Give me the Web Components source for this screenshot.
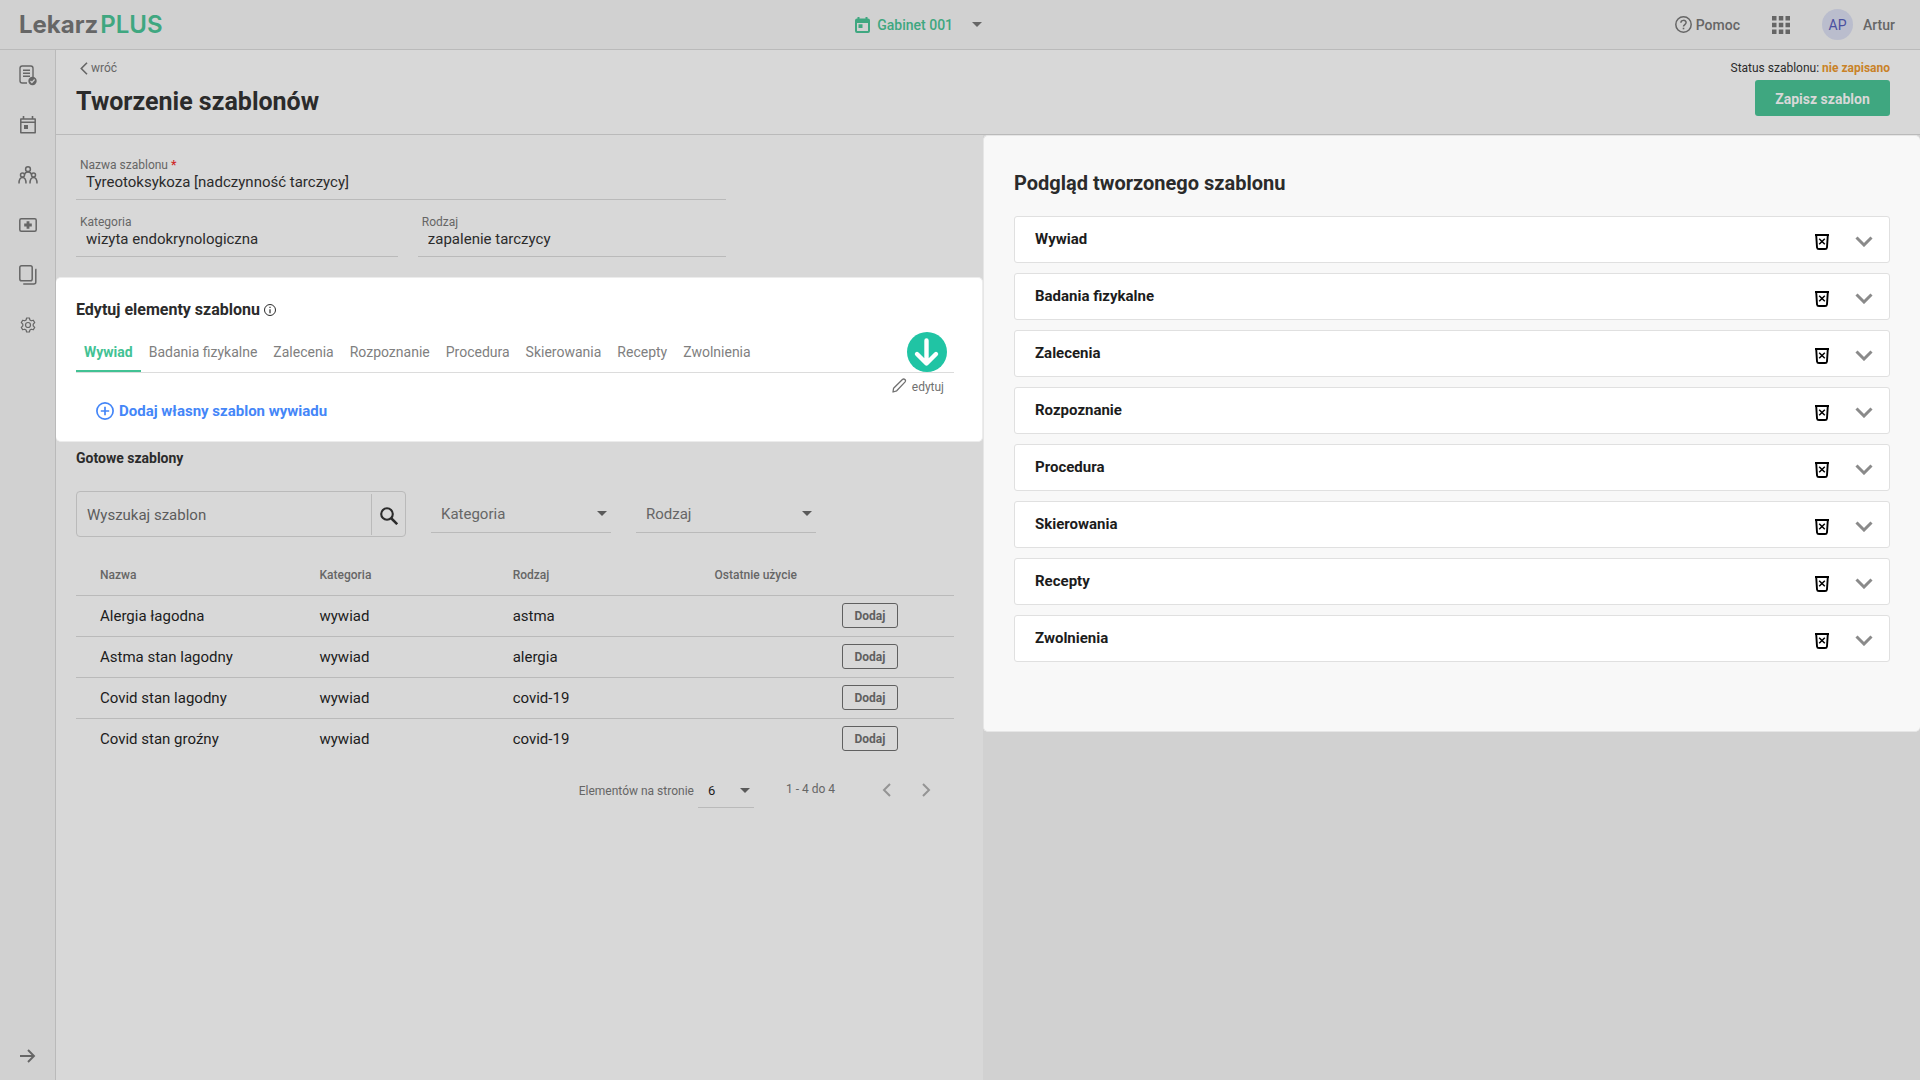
<!DOCTYPE html>
<html lang="pl">
<head>
<meta charset="utf-8">
<title>LekarzPLUS – Tworzenie szablonów</title>
<style>
  :root {
    --bar: #d1d1d1;
    --page: #d8d8d8;
    --line: #bababa;
    --ink: #2b2b2b;
    --muted: #666;
    --green: #3fa780;
  }
  * { box-sizing: border-box; }
  body {
    margin: 0;
    font: 14px/20px Roboto, "Liberation Sans", sans-serif;
    color: var(--ink);
    background: var(--page);
  }
</style>
</head>
<body>
<template-app></template-app>

<script>
const base = `
  *, *::before, *::after { box-sizing: border-box; }
  button, input, select { font: inherit; color: inherit; margin: 0; border: 0; padding: 0; background: none; border-radius: 0; outline: 0; }
  button, select { cursor: pointer; }
  a { color: inherit; text-decoration: none; }
  h1, h2, h3, p { margin: 0; }
`;

class BaseElement extends HTMLElement {
  connectedCallback() {
    if (this.shadowRoot) return;
    const root = this.attachShadow({ mode: 'open' });
    const template = document.createElement('template');
    template.innerHTML = `<style>${base}${this.styles()}</style>${this.markup()}`;
    root.append(template.content.cloneNode(true));
  }
  attr(name, fallback = '') { return this.getAttribute(name) ?? fallback; }
  styles() { return ':host { display: block; }'; }
  markup() { return '<slot></slot>'; }
}

/* name: [width, height, drawing] */
const icons = {
  record: [18, 21, '<path d="M14 12V3.2Q14 1 11.8 1H3.2Q1 1 1 3.2v12.6Q1 18 3.200 18H8" fill="none" stroke="currentColor" stroke-width="1.4"/><path d="M4 5.200h7M4 8.200h7M4 11.200h7" stroke="currentColor" stroke-width="1.400"/><circle cx="13.500" cy="16" r="4.200" fill="currentColor"/><path d="M11.500 16l1.400 1.500 2.700-3" fill="none" stroke="#d1d1d1" stroke-width="1.200"/>'],
  calendar: [16, 18, '<path d="M.8 3h14.400v13.700H.8zM.8 6.200h14.400" fill="none" stroke="currentColor" stroke-width="1.500" stroke-linejoin="round"/><path d="M3.500 0v3M12.500 0v3" stroke="currentColor" stroke-width="1.600"/><path d="M4 9h4v4H4z" fill="currentColor"/>'],
  calendarBold: [15, 16, '<path fill="currentColor" fill-rule="evenodd" d="M2 1.500h.5V0h2v1.500h6V0h2v1.500h.5q2 0 2 2V14q0 2-2 2H2q-2 0-2-2V3.500q0-2 2-2zM2 6v8h11V6zM3.500 7.200h4v3.800h-4z"/>'],
  people: [20, 18, '<g fill="none" stroke="currentColor" stroke-width="1.500"><circle cx="10" cy="3.200" r="2.400"/><circle cx="4.500" cy="9" r="2"/><circle cx="15.500" cy="9" r="2"/><path d="M6.500 8.500C7 6.500 8.500 6 10 6s3 .5 3.500 2.500M1 17.500c0-4 1-6 3.500-6S8 13.500 8 17.500M12 17.500c0-4 1-6 3.500-6s3.500 2 3.500 6"/></g>'],
  medical: [18, 14, '<rect x=".8" y=".8" width="16.400" height="12.400" rx="1.500" fill="none" stroke="currentColor" stroke-width="1.500"/><path d="M9 3.200v7.600M5.200 7h7.600" stroke="currentColor" stroke-width="2.800"/>'],
  copy: [18, 20, '<rect x=".8" y=".8" width="12.400" height="14.900" rx="1.800" fill="none" stroke="currentColor" stroke-width="1.500"/><path d="M16.300 4.500h.5V17q0 2-2 2H5v-.8" fill="none" stroke="currentColor" stroke-width="1.500"/>'],
  gear: [16, 16, '<path d="M6.600 1h2.800l.5 2 1.400.8 2-.6 1.400 2.400-1.500 1.500v1.800l1.500 1.500-1.400 2.400-2-.6-1.400.8-.5 2H6.600l-.5-2-1.400-.8-2 .6-1.400-2.400 1.500-1.500V7.100L1.300 5.600l1.400-2.400 2 .6L6.100 3z" fill="none" stroke="currentColor" stroke-width="1.200" stroke-linejoin="round"/><circle cx="8" cy="8" r="2.500" fill="none" stroke="currentColor" stroke-width="1.200"/>'],
  right: [16, 14, '<path d="M0 7h14M8 1l6 6-6 6" fill="none" stroke="currentColor" stroke-width="1.900"/>'],
  back: [8, 13, '<path d="M7 .8L1.300 6.500 7 12.200" fill="none" stroke="currentColor" stroke-width="1.600"/>'],
  prev: [9, 14, '<path d="M8 1L2 7l6 6" fill="none" stroke="currentColor" stroke-width="2"/>'],
  next: [9, 14, '<path d="M1 1l6 6-6 6" fill="none" stroke="currentColor" stroke-width="2"/>'],
  caret: [10, 5, '<path d="M0 0h10L5 5z" fill="currentColor"/>'],
  help: [17, 17, '<circle cx="8.500" cy="8.500" r="7.700" fill="none" stroke="currentColor" stroke-width="1.500"/><path d="M5.900 6.800c0-3.200 5.200-3.200 5.200-.2 0 1.900-2.600 2-2.600 4" fill="none" stroke="currentColor" stroke-width="1.500"/><path d="M7.700 11.700h1.600v1.600H7.700z" fill="currentColor"/>'],
  apps: [18, 18, '<path d="M0 0h4.500v4.500H0zM6.800 0h4.500v4.500H6.800zM13.500 0H18v4.500h-4.500zM0 6.800h4.500v4.500H0zM6.800 6.800h4.500v4.500H6.800zM13.500 6.800H18v4.500h-4.500zM0 13.500h4.500V18H0zM6.800 13.500h4.500V18H6.800zM13.500 13.500H18V18h-4.500z" fill="currentColor"/>'],
  info: [12, 12, '<circle cx="6" cy="6" r="5.500" fill="none" stroke="currentColor"/><path d="M5.400 2.700h1.200v1.200H5.400zM5.400 5.200h1.200v4H5.400z" fill="currentColor"/>'],
  plus: [18, 18, '<circle cx="9" cy="9" r="8.100" fill="none" stroke="currentColor" stroke-width="1.700"/><path d="M9 4.800v8.400M4.800 9h8.400" stroke="currentColor" stroke-width="1.700"/>'],
  pencil: [15, 15, '<path d="M1 14l.6-3.800L10.400 1.500q1.300-1.100 2.500 0 1.200 1.200 0 2.600L4.700 12.800z" fill="none" stroke="currentColor" stroke-width="1.300" stroke-linejoin="round"/>'],
  search: [18, 18, '<circle cx="7" cy="7" r="5.800" fill="none" stroke="currentColor" stroke-width="2.100"/><path d="M11 11l6.200 6.200" stroke="currentColor" stroke-width="2.500"/>'],
  trash: [14, 16, '<path d="M0 1h14M1.200 1l.8 12.300Q2.200 15 4 15h6q1.800 0 2-1.700L12.800 1" fill="none" stroke="currentColor" stroke-width="1.900"/><path d="M4.200 4.700l5.600 5.600M9.800 4.700l-5.600 5.600" stroke="currentColor" stroke-width="1.500"/>'],
  down: [18, 11, '<path d="M1.500 1.500L9 9l7.500-7.500" fill="none" stroke="currentColor" stroke-width="3"/>'],
  pointer: [40, 40, '<circle cx="20" cy="20" r="20" fill="#20c4a4"/><path d="M19.500 8.500V31M10 22l9.500 9.500L29 22" fill="none" stroke="#fff" stroke-width="4.400" stroke-linecap="round" stroke-linejoin="round"/>'],
};

customElements.define('app-icon', class extends BaseElement {
  styles() { return ':host { display: inline-flex; flex: none; } svg { display: block; }'; }
  markup() {
    const [w, h, art] = icons[this.attr('name')];
    return `<svg width="${w}" height="${h}" viewBox="0 0 ${w} ${h}" aria-hidden="true">${art}</svg>`;
  }
});

customElements.define('app-header', class extends BaseElement {
  styles() { return `
    :host { display: flex; justify-content: space-between; align-items: center; height: 50px; padding: 0 25px 0 19px;
      background: var(--bar); border-bottom: 1px solid var(--line); color: var(--muted); font-weight: 500; }
    .logo { font: 700 24px/30px Inter, sans-serif; }
    .logo span { color: var(--green); font-weight: 600; margin-left: 2px; }
    button, a { display: flex; align-items: center; }
    .office { color: var(--green); gap: 7px; }
    .office app-icon:last-child { color: var(--muted); margin-left: 12px; }
    .tools { display: flex; align-items: center; }
    .help { gap: 4px; margin-right: 32px; }
    .user { gap: 10px; margin-left: 32px; }
    .avatar { display: grid; place-items: center; width: 31px; height: 31px; border-radius: 50%;
      background: #babdcd; color: #4a50a0; font-weight: 400; }
  `; }
  markup() { return `
    <a class="logo" href="#start">Lekarz<span>PLUS</span></a>
    <button class="office" type="button"><app-icon name="calendarBold"></app-icon>Gabinet 001<app-icon name="caret"></app-icon></button>
    <div class="tools">
      <a class="help" href="#pomoc"><app-icon name="help"></app-icon>Pomoc</a>
      <button type="button" aria-label="Aplikacje"><app-icon name="apps"></app-icon></button>
      <button class="user" type="button"><span class="avatar">AP</span>Artur</button>
    </div>`; }
});

customElements.define('side-nav', class extends BaseElement {
  styles() { return `
    :host { display: flex; flex-direction: column; justify-content: space-between; width: 56px; flex: none;
      background: var(--bar); border-right: 1px solid var(--line); color: var(--muted); }
    nav { display: flex; flex-direction: column; }
    a, button { display: grid; place-items: center; width: 55px; height: 50px; }
    button { height: 48px; }
  `; }
  markup() {
    const items = [['record', 'Wizyty'], ['calendar', 'Kalendarz'], ['people', 'Pacjenci'], ['medical', 'Leki'], ['copy', 'Szablony'], ['gear', 'Ustawienia']];
    return `<nav>${items.map(([i, l]) => `<a href="#${i}" aria-label="${l}"><app-icon name="${i}"></app-icon></a>`).join('')}</nav>
      <button type="button" aria-label="Rozwiń menu"><app-icon name="right"></app-icon></button>`;
  }
});

customElements.define('page-head', class extends BaseElement {
  styles() { return `
    :host { display: flex; justify-content: space-between; height: 85px; padding: 10px 30px 0 20px; border-bottom: 1px solid var(--line); }
    .back { display: flex; align-items: center; gap: 3px; margin-left: 4px; font-size: 12px; line-height: 16px; color: var(--muted); }
    h1 { font: 700 25px/32px Roboto, sans-serif; margin-top: 10px; }
    .status { display: flex; flex-direction: column; align-items: flex-end; gap: 4px; font-size: 12px; line-height: 16px; }
    b { color: #c98228; font-weight: 700; }
    button { min-width: 135px; height: 36px; padding: 1px 20px 0; border-radius: 3px; background: var(--green); color: #d8d8d8; font-weight: 700; font-size: 14px; }
  `; }
  markup() { return `
    <div><a class="back" href="#wroc"><app-icon name="back"></app-icon>wróć</a><h1><slot></slot></h1></div>
    <div class="status"><p>Status szablonu: <b>nie zapisano</b></p><button type="button">Zapisz szablon</button></div>`; }
});

customElements.define('text-field', class extends BaseElement {
  styles() { return `
    :host { display: block; }
    label { display: block; padding-left: 4px; font-size: 12px; line-height: 16px; color: var(--muted); }
    i { color: #cf2a2a; font-style: normal; font-weight: 700; }
    input { display: block; width: 100%; height: 27px; padding: 0 10px 8px; border-bottom: 1px solid var(--line); font-size: 15px; }
  `; }
  markup() { return `
    <label for="f">${this.attr('label')}${this.hasAttribute('required') ? ' <i>*</i>' : ''}</label>
    <input id="f" type="text" value="${this.attr('value')}">`; }
});

customElements.define('select-field', class extends BaseElement {
  styles() { return `
    :host { display: grid; align-items: center; width: 180px; height: 42px; border-bottom: 1px solid var(--line); color: var(--muted); font-size: 15px; }
    select { grid-area: 1 / 1; appearance: none; width: 100%; height: 100%; padding: 4px 28px 0 10px; }
    app-icon { grid-area: 1 / 1; justify-self: end; margin: 4px 4px 0 0; pointer-events: none; color: #5a5a5a; }
    :host([compact]) { width: 56px; height: 35px; font-size: 13px; color: #1c1c1c; }
    :host([compact]) select { padding-top: 1px; }
    :host([compact]) app-icon { margin-top: 0; }
  `; }
  markup() { return `<select aria-label="${this.attr('label')}"><option>${this.attr('value', this.attr('label'))}</option></select><app-icon name="caret"></app-icon>`; }
});

customElements.define('template-form', class extends BaseElement {
  styles() { return `
    :host { display: block; padding: 22px 29px 20px 20px; }
    form { display: grid; grid-template-columns: 322fr 308fr; gap: 14px 20px; width: 74%; }
    .wide { grid-column: 1 / -1; }
  `; }
  markup() { return `<form>
    <text-field class="wide" label="Nazwa szablonu" required value="Tyreotoksykoza [nadczynność tarczycy]"></text-field>
    <text-field label="Kategoria" value="wizyta endokrynologiczna"></text-field>
    <text-field label="Rodzaj" value="zapalenie tarczycy"></text-field>
  </form>`; }
});

customElements.define('element-editor', class extends BaseElement {
  styles() { return `
    :host { display: block; padding: 22px 28px 20px 20px; background: #fff; border: 1px solid #ececec; border-width: 1px 1px 1px 0; border-radius: 5px; }
    h2 { display: flex; align-items: center; gap: 4px; font: 700 16px/20px Roboto, sans-serif; }
    .bar { position: relative; margin-top: 13px; }
    .tabs { display: flex; height: 40px; border-bottom: 1px solid #dcdcdc; color: #808080; }
    .tabs button { padding: 0 8px 2px; }
    .tabs [aria-selected=true] { color: #42c294; font-weight: 700; box-shadow: inset 0 -2px #42c294; }
    .pointer { position: absolute; right: 7px; bottom: 1px; }
    .edit { display: flex; align-items: flex-start; gap: 5px; margin: 5px 10px 0 auto; font-size: 12px; line-height: 18px; color: #707070; }
    .add { display: flex; align-items: center; gap: 5px; margin: 5px 0 0 20px; font-size: 15px; line-height: 20px; font-weight: 700; color: #4486f8; }
  `; }
  markup() {
    const tabs = ['Wywiad', 'Badania fizykalne', 'Zalecenia', 'Rozpoznanie', 'Procedura', 'Skierowania', 'Recepty', 'Zwolnienia'];
    return `<h2>Edytuj elementy szablonu<app-icon name="info"></app-icon></h2>
      <div class="bar">
        <div class="tabs" role="tablist">${tabs.map((t, i) => `<button type="button" role="tab" aria-selected="${i === 0}">${t}</button>`).join('')}</div>
        <app-icon class="pointer" name="pointer"></app-icon>
      </div>
      <button class="edit" type="button"><app-icon name="pencil"></app-icon>edytuj</button>
      <button class="add" type="button"><app-icon name="plus"></app-icon>Dodaj własny szablon wywiadu</button>`;
  }
});

customElements.define('template-filters', class extends BaseElement {
  styles() { return `
    :host { display: flex; align-items: flex-start; gap: 25px; }
    form { display: flex; align-items: center; width: 330px; height: 46px; border: 1px solid var(--line); border-radius: 4px; }
    input { flex: 1; min-width: 0; height: 100%; padding: 2px 10px 0; font-size: 15px; }
    input::placeholder { color: #5c5c5c; opacity: 1; }
    button { display: grid; place-items: center; width: 34px; height: 41px; padding-top: 3px; border-left: 1px solid var(--line); }
  `; }
  markup() { return `
    <form role="search"><input type="text" aria-label="Wyszukaj szablon" placeholder="Wyszukaj szablon"><button type="button" aria-label="Szukaj"><app-icon name="search"></app-icon></button></form>
    <select-field label="Kategoria"></select-field><select-field label="Rodzaj"></select-field>`; }
});

customElements.define('template-table', class extends BaseElement {
  styles() { return `
    :host { display: block; }
    table { width: 100%; table-layout: fixed; border-collapse: separate; border-spacing: 0; }
    th, td { height: 41px; padding: 0 0 0 24px; text-align: left; border-bottom: 1px solid var(--line); }
    th { font-size: 12px; font-weight: 500; color: var(--muted); }
    td { font-size: 15px; color: #1c1c1c; }
    tr:last-child td { border-bottom-color: transparent; }
    td:last-child { padding: 0 0 1px 2px; }
    button { display: block; width: 56px; height: 25px; padding-top: 1px; border: 1px solid #606060; border-radius: 3px; font-size: 12px; line-height: 22px; font-weight: 700; color: #606060; }
  `; }
  markup() {
    const rows = [['Alergia łagodna', 'astma'], ['Astma stan lagodny', 'alergia'], ['Covid stan lagodny', 'covid-19'], ['Covid stan groźny', 'covid-19']];
    return `<table>
      <colgroup><col style="width:25%"><col style="width:22%"><col style="width:23%"><col style="width:17%"><col></colgroup>
      <thead><tr><th>Nazwa</th><th>Kategoria</th><th>Rodzaj</th><th>Ostatnie użycie</th><th></th></tr></thead>
      <tbody>${rows.map(([n, r]) => `<tr><td>${n}</td><td>wywiad</td><td>${r}</td><td></td><td><button type="button">Dodaj</button></td></tr>`).join('')}</tbody>
    </table>`;
  }
});

customElements.define('table-pager', class extends BaseElement {
  styles() { return `
    :host { display: flex; justify-content: flex-end; align-items: center; padding-right: 23px; font-size: 12px; color: var(--muted); }
    select-field { margin: 0 32px 0 4px; }
    .range { padding-bottom: 3px; margin-right: 47px; }
    button { display: flex; padding-bottom: 1px; color: #949494; }
    button + button { margin-left: 31px; }
  `; }
  markup() { return `
    <span>Elementów na stronie</span><select-field compact label="Elementów na stronie" value="6"></select-field>
    <span class="range">1 - 4 do 4</span>
    <button type="button" aria-label="Poprzednia"><app-icon name="prev"></app-icon></button>
    <button type="button" aria-label="Następna"><app-icon name="next"></app-icon></button>`; }
});

customElements.define('ready-templates', class extends BaseElement {
  styles() { return `
    :host { display: block; padding: 6px 29px 20px 20px; }
    h2 { font: 700 14px/20px Roboto, sans-serif; }
    template-filters { margin-top: 23px; }
    template-table { margin-top: 18px; }
    table-pager { margin-top: 13px; }
  `; }
  markup() { return `<h2>Gotowe szablony</h2><template-filters></template-filters><template-table></template-table><table-pager></table-pager>`; }
});

customElements.define('preview-item', class extends BaseElement {
  styles() { return `
    :host { display: flex; align-items: center; height: 47px; padding: 0 16px 0 20px; background: #fff; border: 1px solid #e0e0e0; border-radius: 3px; }
    h3 { flex: 1; padding-bottom: 2px; font: 700 15px/20px Roboto, sans-serif; color: #1c1c1c; }
    button { display: flex; padding-top: 3px; color: #8a8a8a; }
    .remove { margin-right: 26px; padding-top: 4px; color: #000; }
  `; }
  markup() { return `<h3><slot></slot></h3>
    <button class="remove" type="button" aria-label="Usuń"><app-icon name="trash"></app-icon></button>
    <button type="button" aria-label="Rozwiń"><app-icon name="down"></app-icon></button>`; }
});

customElements.define('template-preview', class extends BaseElement {
  styles() { return `
    :host { display: block; padding: 34px 30px 69px; background: #f8f8f8; border: 1px solid #e6e6e6; border-right: 0; border-radius: 5px; }
    h2 { font: 700 20px/26px Roboto, sans-serif; }
    .list { display: flex; flex-direction: column; gap: 10px; margin-top: 20px; }
  `; }
  markup() { return `<h2>Podgląd tworzonego szablonu</h2><div class="list"><slot></slot></div>`; }
});

customElements.define('template-app', class extends BaseElement {
  styles() { return `
    :host { display: flex; flex-direction: column; min-height: 100vh; }
    .body { display: flex; flex: 1; }
    main { display: flex; flex-direction: column; flex: 1; min-width: 0; }
    .columns { display: grid; grid-template-columns: 927fr 937fr; flex: 1; }
    .side { background: var(--bar); }
  `; }
  markup() {
    const items = ['Wywiad', 'Badania fizykalne', 'Zalecenia', 'Rozpoznanie', 'Procedura', 'Skierowania', 'Recepty', 'Zwolnienia'];
    return `<app-header></app-header>
    <div class="body">
      <side-nav></side-nav>
      <main>
        <page-head>Tworzenie szablonów</page-head>
        <div class="columns">
          <section><template-form></template-form><element-editor></element-editor><ready-templates></ready-templates></section>
          <section class="side"><template-preview>${items.map(t => `<preview-item>${t}</preview-item>`).join('')}</template-preview></section>
        </div>
      </main>
    </div>`;
  }
});
</script>
</body>
</html>
